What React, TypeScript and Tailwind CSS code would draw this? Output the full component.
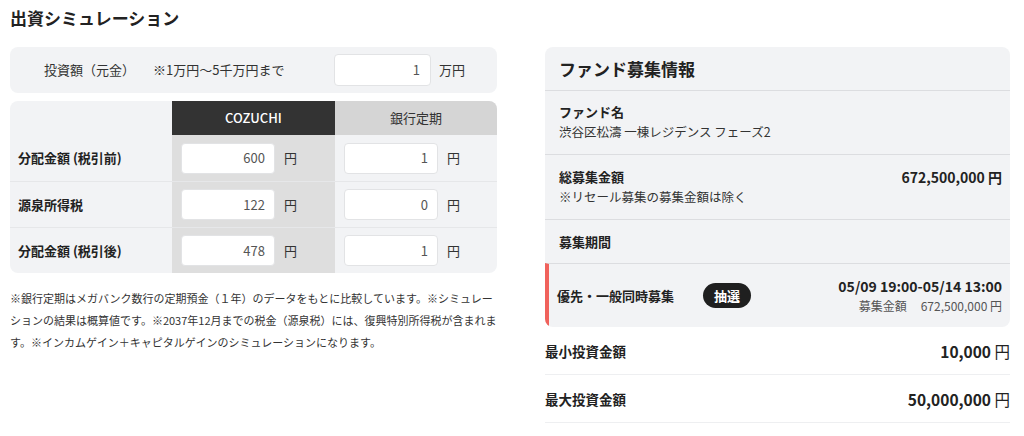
import type { ReactNode } from 'react';

const FONT = { fontFamily: '"Noto Sans CJK JP", "Noto Sans", sans-serif' };

const ROWS = [
  { label: '分配金額 (税引前)', cozuchi: '600', bank: '1' },
  { label: '源泉所得税', cozuchi: '122', bank: '0' },
  { label: '分配金額 (税引後)', cozuchi: '478', bank: '1' },
];

function Field({ value, unit }: { value: string; unit: string }) {
  return (
    <div className="flex items-center">
      <div className="flex h-[31px] w-[94px] items-center justify-end rounded border border-[#e2e3e5] bg-white pr-[9px] text-[13px] text-[#555]">
        {value}
      </div>
      <span className="ml-[9px] text-[13px] text-[#333]">{unit}</span>
    </div>
  );
}

function Simulation() {
  return (
    <div className="w-[487px] shrink-0">
      <h1 className="pt-[6px] text-[17px] font-bold leading-[24px] text-[#222]">出資シミュレーション</h1>

      <div className="mt-[17px] flex h-[46px] items-center rounded-lg bg-[#f2f3f5] text-[13px] text-[#333]">
        <span className="ml-[34px]">投資額（元金）</span>
        <span className="ml-[18px]">※1万円〜5千万円まで</span>
        <div className="ml-auto flex h-[32px] w-[97px] items-center justify-end rounded border border-[#e2e3e5] bg-white pr-[10px] text-[13px] text-[#555]">
          1
        </div>
        <span className="ml-[8px] mr-[32px]">万円</span>
      </div>

      <div className="mt-[8px] overflow-hidden rounded-lg bg-[#f2f3f5]">
        <div className="grid h-[34px] grid-cols-[162px_163px_162px] text-[13px]">
          <div />
          <div className="flex items-center justify-center bg-[#333] font-medium text-white">COZUCHI</div>
          <div className="flex items-center justify-center bg-[#d5d5d5] text-[#333]">銀行定期</div>
        </div>
        {ROWS.map((r, i) => (
          <div
            key={r.label}
            className={`grid h-[46px] grid-cols-[162px_163px_162px] ${i > 0 ? 'border-t border-[#e6e7e9]' : ''}`}
          >
            <div className="flex items-center pl-[8px] text-[13px] font-bold text-[#222]">{r.label}</div>
            <div className="flex items-center bg-[#dedede] pl-[9px]">
              <Field value={r.cozuchi} unit="円" />
            </div>
            <div className="flex items-center pl-[9px]">
              <Field value={r.bank} unit="円" />
            </div>
          </div>
        ))}
      </div>

      <p className="mt-[14px] text-[11px] leading-[22px] text-[#333]">
        ※銀行定期はメガバンク数行の定期預金（１年）のデータをもとに比較しています。※シミュレーションの結果は概算値です。※2037年12月までの税金（源泉税）には、復興特別所得税が含まれます。※インカムゲイン＋キャピタルゲインのシミュレーションになります。
      </p>
    </div>
  );
}

function Section({ children, className = '' }: { children: ReactNode; className?: string }) {
  return <div className={`border-t border-[#dcdde0] pl-[14px] pr-[8px] ${className}`}>{children}</div>;
}

function FundInfo() {
  return (
    <div className="ml-[48px] w-[465px] shrink-0 pt-[47px]">
      <div className="overflow-hidden rounded-lg bg-[#f2f3f5]">
        <div className="flex h-[43px] items-center px-[14px] text-[17px] font-bold text-[#222]">ファンド募集情報</div>

        <Section className="pb-[12px] pt-[11px]">
          <p className="text-[13px] font-bold leading-[20px] text-[#222]">ファンド名</p>
          <p className="text-[12.5px] leading-[20px] text-[#333]">渋谷区松濤 一棟レジデンス フェーズ2</p>
        </Section>

        <Section className="py-[12px]">
          <div className="flex items-center justify-between">
            <p className="text-[13px] font-bold leading-[20px] text-[#222]">総募集金額</p>
            <p className="text-[14px] font-bold leading-[20px] text-[#222]">672,500,000 円</p>
          </div>
          <p className="text-[12.5px] leading-[20px] text-[#333]">※リセール募集の募集金額は除く</p>
        </Section>

        <Section className="flex h-[44px] items-center">
          <p className="text-[13px] font-bold text-[#222]">募集期間</p>
        </Section>

        <div className="flex h-[64px] items-center border-t border-[#dcdde0] border-l-4 border-l-[#f0625c] pl-[8px] pr-[8px]">
          <span className="text-[13px] font-bold text-[#222]">優先・一般同時募集</span>
          <span className="ml-[29px] flex h-[25px] w-[48px] items-center justify-center rounded-full bg-[#1f1f1f] text-[13px] font-bold text-white">
            抽選
          </span>
          <div className="ml-auto text-right">
            <p className="text-[14px] font-bold leading-[20px] text-[#222]">05/09 19:00-05/14 13:00</p>
            <p className="text-[12px] leading-[20px] text-[#555]">
              募集金額<span className="ml-[14px]">672,500,000 円</span>
            </p>
          </div>
        </div>
      </div>

      {[
        ['最小投資金額', '10,000'],
        ['最大投資金額', '50,000,000'],
      ].map(([label, value]) => (
        <div key={label} className="flex h-[48px] items-center justify-between border-b border-[#eeeff1] pt-[2px]">
          <span className="text-[13.5px] font-bold text-[#222]">{label}</span>
          <span className="text-[15.5px] text-[#222]">
            <span className="font-bold">{value}</span> 円
          </span>
        </div>
      ))}
    </div>
  );
}

export default function App() {
  return (
    <div className="flex h-[436px] w-[1024px] overflow-hidden bg-white pl-[10px]" style={FONT}>
      <Simulation />
      <FundInfo />
    </div>
  );
}
